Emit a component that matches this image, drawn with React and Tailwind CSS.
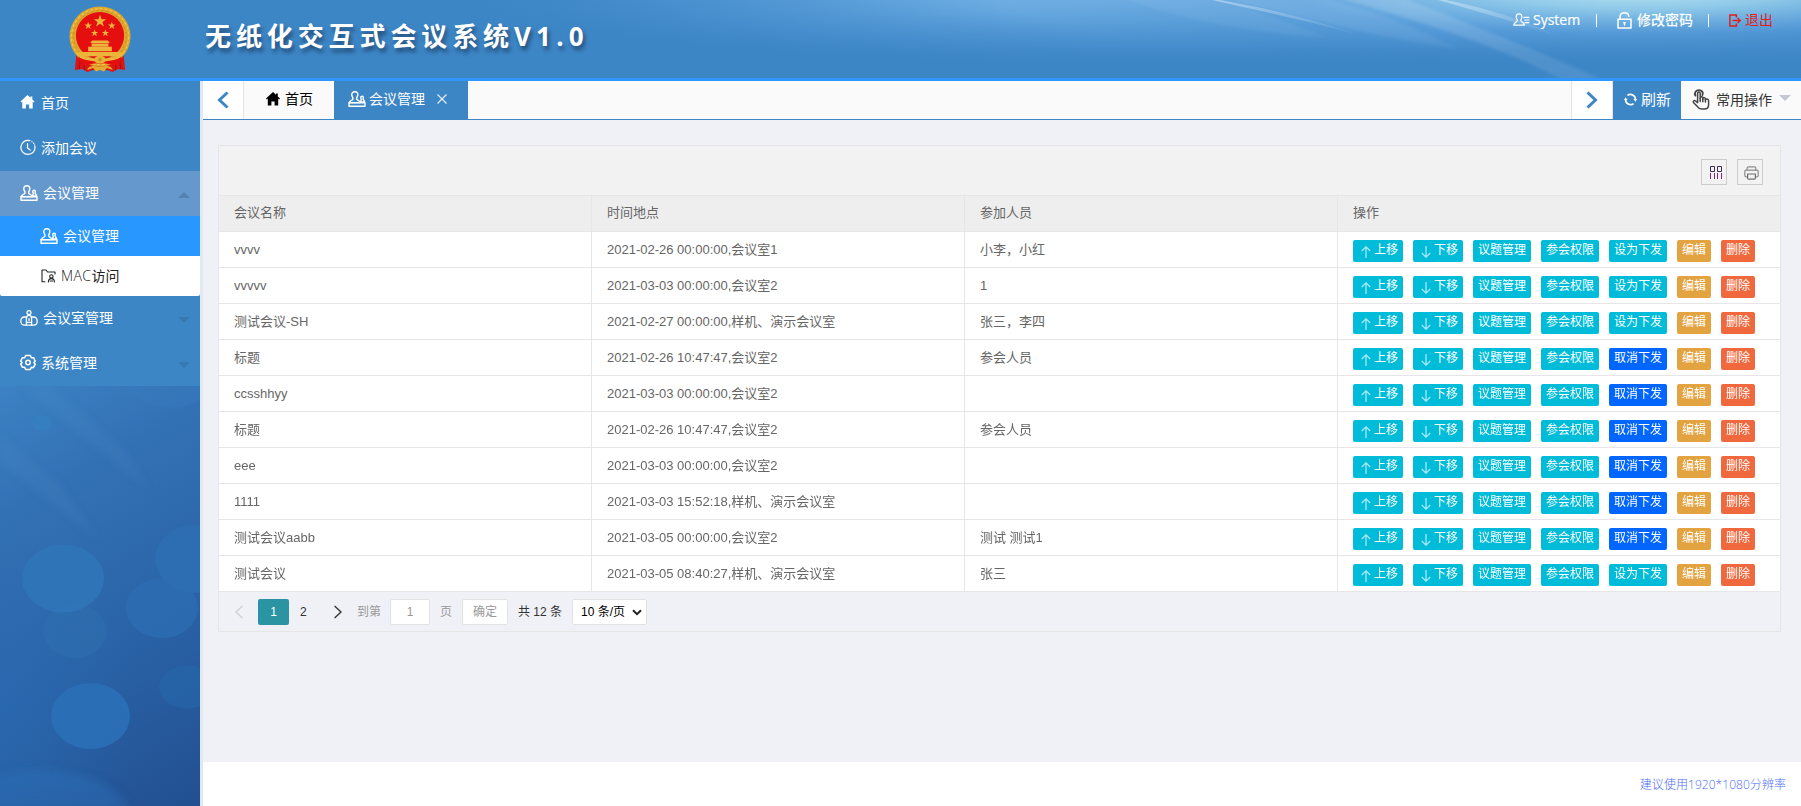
import React from "react";

const stroke = { fill: "none", stroke: "currentColor", strokeLinecap: "round", strokeLinejoin: "round" };

function HomeIcon({ className }) {
  return (
    <svg viewBox="0 0 14 14" className={className} fill="currentColor">
      <path d="M7 0 L0 6.6 L0.8 7.4 L1.8 6.6 V13.6 H5.4 V9.4 H8.6 V13.6 H12.2 V6.6 L13.2 7.4 L14 6.6 L11.8 4.5 V1.4 H10 V2.8 Z" />
    </svg>
  );
}

function ClockIcon({ className }) {
  return (
    <svg viewBox="0 0 17 17" className={className} {...stroke} strokeWidth="1.3">
      <path d="M10.5 1.2 A7.5 7.5 0 1 0 15.8 7" />
      <path d="M12.6 2.2 L12.8 2.4 M14.4 3.9 L14.6 4.2 M15.5 5.7 V5.8" />
      <path d="M8 4.5 V9 L10.8 11.2" />
    </svg>
  );
}

function MeetingIcon({ className }) {
  return (
    <svg viewBox="0 0 18 16" className={className} {...stroke} strokeWidth="1.4">
      <path d="M6.8 0.8 C4.3 0.8 3.6 2.6 3.8 4.2 C4 6 5.2 6.6 5 7.8 C4.8 9.4 2.2 9.4 1.2 11.6 H12.4 C11.4 9.4 8.8 9.4 8.6 7.8 C8.4 6.6 9.6 6 9.8 4.2 C10 2.6 9.3 0.8 6.8 0.8 Z" />
      <path d="M1 11.8 H17 V15.2 H1 Z" />
      <path d="M14 5.2 C12.6 5.2 12.4 7 13.2 7.8 C13.6 8.6 12.6 9.4 12.6 11 H16.6 C16.6 9.4 14.8 8.6 15 7.8 C15.8 7 15.4 5.2 14 5.2 Z" />
    </svg>
  );
}

function FolderUserIcon({ className }) {
  return (
    <svg viewBox="0 0 15 14" className={className} {...stroke} strokeWidth="1.1">
      <path d="M4 12.8 H1 V1 H5 L6.6 3 H14 V5" />
      <circle cx="10.4" cy="7.4" r="1.7" />
      <path d="M7.4 13 C7.4 10.6 8.6 9.6 10.4 9.6 C12.2 9.6 13.4 10.6 13.4 13 M9.2 12 H11.6" />
    </svg>
  );
}

function RoomIcon({ className }) {
  return (
    <svg viewBox="0 0 18 16" className={className} {...stroke} strokeWidth="1.3">
      <circle cx="9" cy="2.6" r="2" />
      <path d="M6.4 15 V8.4 C6.4 6.4 7.4 5.4 9 5.4 C10.6 5.4 11.6 6.4 11.6 8.4 V15" />
      <path d="M6.2 7 H4.4 C2.2 7 0.8 8.8 0.8 11 C0.8 13.4 2.4 15.2 4.4 15.2 H13.6 C15.8 15.2 17.2 13.4 17.2 11 C17.2 8.8 15.8 7 13.6 7 H11.8" />
      <path d="M9 8.6 V10.4 M7.4 12.4 H10.6" />
    </svg>
  );
}

function GearIcon({ className }) {
  return (
    <svg viewBox="0 0 17 17" className={className} {...stroke} strokeWidth="1.6">
      <path d="M6 1 H11 L12 3.4 L14.4 3.4 L16.2 7 L14.8 8.5 L16.2 10.4 L14.2 14 L12 13.6 L11 16 H6 L5 13.6 L2.6 13.6 L0.8 10.2 L2.2 8.5 L0.8 6.8 L2.6 3.4 L5 3.4 Z" />
      <circle cx="8.5" cy="8.5" r="2.4" />
    </svg>
  );
}

function UserListIcon({ className }) {
  return (
    <svg viewBox="0 0 17 14" className={className} {...stroke} strokeWidth="1.2">
      <path d="M6 0.8 C3.8 0.8 3 2.4 3.2 4.2 C3.3 5.6 4.3 6.4 4.4 7.4 C4.5 8.8 0.8 9.4 0.8 12.2 H11.4 C11.4 9.4 7.8 8.8 7.8 7.4 C7.8 6.4 8.8 5.6 8.9 4.2 C9 2.4 8.2 0.8 6 0.8 Z" />
      <path d="M11 4.4 H16 M11.6 7 H16 M12 9.6 H16" />
    </svg>
  );
}

function LockIcon({ className }) {
  return (
    <svg viewBox="0 0 15 17" className={className} {...stroke} strokeWidth="1.5">
      <path d="M1 7.2 H14 V16 H1 Z" />
      <path d="M3 7 V4.6 C3 2 4.8 0.8 7.2 0.8 C9.8 0.8 11.6 2 11.8 4.2" />
      <path d="M7.5 10.8 V13 M6.8 10.8 H8.2" />
    </svg>
  );
}

function ExitIcon({ className }) {
  return (
    <svg viewBox="0 0 12 13" className={className} fill="none" stroke="currentColor" strokeWidth="1.5">
      <path d="M7.4 3.4 V0.9 H0.9 V12.1 H7.4 V9.6" />
      <path d="M3.6 6.5 H11 M8.6 4 L11.1 6.5 L8.6 9" />
    </svg>
  );
}

function RefreshIcon({ className }) {
  return (
    <svg viewBox="0 0 13 13" className={className} fill="none" stroke="currentColor" strokeWidth="1.7">
      <path d="M3.4 2.4 A5 5 0 0 1 11.4 6.6" />
      <path d="M9.6 10.6 A5 5 0 0 1 1.6 6.4" />
      <path d="M9.4 6 H13 L11.4 8.8 Z M0 7 H3.6 L1.6 4.2 Z" fill="currentColor" stroke="none" />
    </svg>
  );
}

function HandIcon({ className }) {
  return (
    <svg viewBox="0 0 18 21" className={className} {...stroke} strokeWidth="1.5">
      <path d="M5.6 13.6 V4.4 C5.6 2.6 8.2 2.6 8.2 4.4 V9.6 V8.6 C8.6 7.4 10.6 7.6 10.8 9 V10.2 V9.4 C11.2 8.2 13.2 8.4 13.4 9.8 V10.8 C13.8 9.6 16.4 9.6 16.6 11.4 V15.4 C16.6 18.4 15 20 12.4 20 H9.6 C7.4 20 6.4 19 5.4 17.6 L1.4 13.4 C0.8 12 2.4 11 3.6 12 L5.6 13.6" />
      <path d="M8.2 9.6 V12.6 M10.8 10.2 V12.8 M13.4 10.8 V13" />
      <path d="M3.4 6.6 C2 3.6 4 1.1 6.9 1.1 C9.8 1.1 11.8 3.6 10.4 6" strokeWidth="1.9" />
    </svg>
  );
}

function Emblem({ className }) {
  const star = "M0 -1 L0.25 -0.3 L0.95 -0.3 L0.38 0.13 L0.6 0.82 L0 0.4 L-0.6 0.82 L-0.38 0.13 L-0.95 -0.3 L-0.25 -0.3 Z";
  return (
    <svg viewBox="0 0 62 68" className={className}>
      <path d="M7 50 L5.5 65 L13 64 L18 67 L24 65 H38 L44 67 L49 64 L56.5 65 L55 50 Z" fill="#dc1414" />
      <path d="M11 55 L10 64 M15 56 V65 M51 55 L52 64 M47 56 V65" stroke="#a50d12" strokeWidth="1" />
      <ellipse cx="31" cy="31" rx="31" ry="30.5" fill="#dda52b" />
      <ellipse cx="31" cy="31" rx="29" ry="28.5" fill="none" stroke="#efc64c" strokeWidth="1.2" strokeDasharray="3 2" />
      <ellipse cx="31" cy="31" rx="26.6" ry="26.2" fill="none" stroke="#bd861f" strokeWidth="0.8" strokeDasharray="2 3" />
      <ellipse cx="31" cy="30" rx="24.5" ry="24" fill="#e60f10" />
      <g fill="#ecb43a">
        <path d={star} transform="translate(31 15.5) scale(6.6)" />
        <path d={star} transform="translate(19 20) scale(4)" />
        <path d={star} transform="translate(43 20) scale(4)" />
        <path d={star} transform="translate(25.5 27.5) scale(3.8)" />
        <path d={star} transform="translate(36.5 27.5) scale(3.8)" />
        <path d="M23 35 H39 L41 37.6 H21 Z M22.5 38 H39.5 V41 H22.5 Z M19 41.4 H43 V46 H19 Z M9 46.6 H53 L50 51 H12 Z" />
      </g>
      <path d="M9 51 C17 58 24 51 31 56 C38 51 45 58 53 51 L50 59 C42 62 36 56 31 59 C26 56 20 62 12 59 Z" fill="#e60f10" />
      <path d="M8 48 C15 56 23 54 27 55 M54 48 C47 56 39 54 35 55" stroke="#ecb840" strokeWidth="2.4" fill="none" />
      <ellipse cx="31" cy="54.5" rx="6" ry="4" fill="#e8b235" />
      <circle cx="31" cy="54.5" r="1.7" fill="#c58c25" />
      <path d="M18 65 C20 59 26 61 31 61.5 C36 61 42 59 44 65 L38 63 L35 66.5 L31 65 L27 66.5 L24 63 Z" fill="#e3ab32" />
    </svg>
  );
}

function HeaderArt() {
  return (
    <svg viewBox="0 0 1801 78" preserveAspectRatio="none" className="absolute inset-0 h-full w-full">
      <defs>
        <radialGradient id="ha" gradientUnits="userSpaceOnUse" cx="0" cy="0" r="1" gradientTransform="translate(1180 -6) scale(760 74)">
          <stop offset="0" stopColor="#86c0ee" />
          <stop offset="0.35" stopColor="#6aabe2" stopOpacity="0.85" />
          <stop offset="0.7" stopColor="#4c93d2" stopOpacity="0.6" />
          <stop offset="1" stopColor="#3d86c6" stopOpacity="0" />
        </radialGradient>
        <radialGradient id="hb" gradientUnits="userSpaceOnUse" cx="0" cy="0" r="1" gradientTransform="translate(1640 -8) scale(640 76)">
          <stop offset="0" stopColor="#b2e2f2" />
          <stop offset="0.22" stopColor="#98d0ec" stopOpacity="0.9" />
          <stop offset="0.55" stopColor="#5b9fdc" stopOpacity="0.7" />
          <stop offset="1" stopColor="#3d86c6" stopOpacity="0" />
        </radialGradient>
        <linearGradient id="hr" x1="0" y1="0" x2="1" y2="1">
          <stop offset="0" stopColor="#fff" stopOpacity="0.22" />
          <stop offset="1" stopColor="#fff" stopOpacity="0.1" />
        </linearGradient>
        <linearGradient id="hs" x1="0" y1="0" x2="1" y2="0">
          <stop offset="0" stopColor="#fff" stopOpacity="0.4" />
          <stop offset="1" stopColor="#fff" stopOpacity="0" />
        </linearGradient>
        <filter id="soft" x="-10%" y="-10%" width="120%" height="120%">
          <feGaussianBlur stdDeviation="1.6" />
        </filter>
      </defs>
      <rect width="1801" height="78" fill="#3d86c6" />
      <rect width="1801" height="78" fill="url(#ha)" />
      <rect width="1801" height="78" fill="url(#hb)" />
      <g filter="url(#soft)">
        <path d="M1214 -4 C1300 18 1400 42 1460 49 C1400 20 1360 8 1320 -4 Z" fill="url(#hr)" opacity="0.5" />
        <path d="M1330 -4 C1420 20 1510 50 1566 82 H1606 C1540 50 1450 18 1400 -4 Z" fill="url(#hr)" opacity="0.75" />
        <path d="M1120 -4 C1160 14 1240 32 1330 38 L1214 -4 Z" fill="#fff" opacity="0.05" />
      </g>
      <path d="M1212 0 C1260 11 1310 21 1370 38 C1310 18 1270 9 1220 0 Z" fill="url(#hs)" />
      <path d="M1438 0 C1480 12 1530 26 1561 38 C1530 22 1490 9 1446 0 Z" fill="url(#hs)" />
    </svg>
  );
}

function SidebarArt() {
  return (
    <svg viewBox="0 0 200 420" preserveAspectRatio="none" className="block h-full w-full">
      <defs>
        <linearGradient id="sa" gradientUnits="userSpaceOnUse" x1="0" y1="0" x2="230" y2="400">
          <stop offset="0" stopColor="#3c82c4" />
          <stop offset="0.25" stopColor="#3371b5" />
          <stop offset="0.6" stopColor="#2a63a8" />
          <stop offset="1" stopColor="#225091" />
        </linearGradient>
        <radialGradient id="sb" gradientUnits="userSpaceOnUse" cx="0" cy="0" r="1" gradientTransform="translate(0 330) scale(130 200)">
          <stop offset="0" stopColor="#2a6cb4" stopOpacity="0.55" />
          <stop offset="1" stopColor="#2a6cb4" stopOpacity="0" />
        </radialGradient>
        <linearGradient id="sc" x1="0" y1="0" x2="0" y2="1">
          <stop offset="0" stopColor="#2a70b8" stopOpacity="0.7" />
          <stop offset="1" stopColor="#2664ad" stopOpacity="0.6" />
        </linearGradient>
        <filter id="haze" x="-20%" y="-20%" width="140%" height="140%">
          <feGaussianBlur stdDeviation="4" />
        </filter>
      </defs>
      <rect width="200" height="420" fill="url(#sa)" />
      <rect width="200" height="420" fill="url(#sb)" />
      <g filter="url(#haze)">
        <path d="M22 0 L150 105 L125 65 L50 0 Z" fill="#5a9ad0" opacity="0.12" />
        <path d="M0 75 L100 155 L60 100 L0 50 Z" fill="#5a9ad0" opacity="0.12" />
        <ellipse cx="40" cy="432" rx="90" ry="48" fill="url(#sc)" opacity="0.7" />
      </g>
      <ellipse cx="170" cy="-10" rx="45" ry="32" fill="#3a80c2" opacity="0.22" />
      <ellipse cx="42" cy="37" rx="10" ry="8" fill="#3286c4" opacity="0.45" />
      <ellipse cx="75" cy="245" rx="32" ry="27" fill="#2e70b0" opacity="0.45" />
      <ellipse cx="63" cy="192.5" rx="41" ry="34" fill="#3076b8" opacity="0.9" />
      <ellipse cx="162" cy="222" rx="36" ry="30" fill="#2d6db2" opacity="0.8" />
      <ellipse cx="194" cy="173" rx="39" ry="34" fill="#2e6eb3" opacity="0.85" />
      <ellipse cx="187" cy="301" rx="28" ry="21.5" fill="#2764a8" opacity="0.75" />
      <ellipse cx="90.5" cy="330" rx="39.5" ry="33" fill="#2a6fb6" opacity="0.95" />
    </svg>
  );
}

function MenuItem({ icon, label, arrow, active, gap = "gap-[5px]" }) {
  return (
    <div className={`flex h-[45px] items-center pl-5 pr-2.5 ${gap} ${active ? "bg-[#6598cd]" : "bg-[#3d86c6]"}`}>
      {icon}
      <span className="-mt-px flex-1">{label}</span>
      {arrow === "down" && <i className="mt-0.5 border-x-[6px] border-t-[6px] border-x-transparent border-t-[#34719f]/60" />}
      {arrow === "up" && <i className="mt-0.5 border-x-[6px] border-b-[6px] border-x-transparent border-b-[#5681b3]" />}
    </div>
  );
}

const meetings = [
  ["vvvv", "2021-02-26 00:00:00,会议室1", "小李，小红", false],
  ["vvvvv", "2021-03-03 00:00:00,会议室2", "1", false],
  ["测试会议-SH", "2021-02-27 00:00:00,样机、演示会议室", "张三，李四", false],
  ["标题", "2021-02-26 10:47:47,会议室2", "参会人员", true],
  ["ccsshhyy", "2021-03-03 00:00:00,会议室2", "", true],
  ["标题", "2021-02-26 10:47:47,会议室2", "参会人员", true],
  ["eee", "2021-03-03 00:00:00,会议室2", "", true],
  ["1111", "2021-03-03 15:52:18,样机、演示会议室", "", true],
  ["测试会议aabb", "2021-03-05 00:00:00,会议室2", "测试 测试1", true],
  ["测试会议", "2021-03-05 08:40:27,样机、演示会议室", "张三", false],
];

function Arrow({ down }) {
  return (
    <svg viewBox="0 0 10 12" className="mt-0.5 mr-[3px] h-3 w-2.5" fill="none" stroke="#a5e8f1" strokeWidth="1.3">
      {down ? <path d="M5 0 V11 M0.8 7 L5 11.2 L9.2 7" /> : <path d="M5 12 V1 M0.8 5 L5 0.8 L9.2 5" />}
    </svg>
  );
}

function Btn({ color, width, children }) {
  return (
    <button className={`flex h-[22px] items-center justify-center rounded-[2px] pb-px text-xs leading-[21px] text-white ${color} ${width}`}>
      {children}
    </button>
  );
}

const grid = "grid grid-cols-[373px_373px_373px_1fr]";
const cell = "flex items-center border-r border-b border-[#e6e6e6] pl-[15px]";
const lastCell = "flex items-center border-b border-[#e6e6e6] pl-[15px]";

function Row({ item }) {
  const [name, place, people, sent] = item;
  return (
    <div className={`${grid} h-9 bg-white`}>
      <div className={cell}>{name}</div>
      <div className={cell}>{place}</div>
      <div className={cell}>{people}</div>
      <div className={`${lastCell} gap-2.5 pt-[3px]`}>
        <Btn color="bg-[#00bcd9]" width="w-[50px] pl-[3px]"><Arrow />上移</Btn>
        <Btn color="bg-[#00bcd9]" width="w-[50px] pl-[3px]"><Arrow down />下移</Btn>
        <Btn color="bg-[#00bcd9]" width="w-[58px]">议题管理</Btn>
        <Btn color="bg-[#00bcd9]" width="w-[58px]">参会权限</Btn>
        {sent ? (
          <Btn color="bg-[#0066ff]" width="w-[58px]">取消下发</Btn>
        ) : (
          <Btn color="bg-[#00bcd9]" width="w-[58px]">设为下发</Btn>
        )}
        <Btn color="bg-[#e4a341]" width="w-[34px]">编辑</Btn>
        <Btn color="bg-[#f0693e]" width="w-[34px]">删除</Btn>
      </div>
    </div>
  );
}

function Pager() {
  return (
    <div className="flex h-[39px] items-center pt-px pl-4 text-xs text-[#333]">
      <svg viewBox="0 0 8 14" className="h-3.5 w-2" fill="none" stroke="#cfd0d4" strokeWidth="1.4"><path d="M7.4 1 L1 7 L7.4 13" /></svg>
      <span className="ml-[15px] h-[26px] w-[31px] rounded-[2px] bg-[#2a94a2] text-center leading-[26px] text-white">1</span>
      <span className="ml-[11px] w-[7px]">2</span>
      <svg viewBox="0 0 8 14" className="ml-[27px] h-3.5 w-2" fill="none" stroke="#333" strokeWidth="1.4"><path d="M0.6 1 L7 7 L0.6 13" /></svg>
      <span className="ml-[15px] w-6 text-[#999]">到第</span>
      <span className="ml-[9px] h-[26px] w-10 rounded-[2px] border border-[#e2e2e2] bg-white text-center leading-6 text-[#999]">1</span>
      <span className="ml-2.5 w-3 text-[#999]">页</span>
      <span className="ml-2.5 h-[26px] w-[46px] rounded-[2px] border border-[#e2e2e2] bg-white text-center leading-[25px] text-[#999]">确定</span>
      <span className="ml-2.5 w-11 whitespace-nowrap">共 12 条</span>
      <span className="ml-2.5 flex h-[26px] w-[75px] items-center justify-between rounded-[2px] border border-[#e2e2e2] bg-white pl-2 pr-1 text-black">
        <span className="whitespace-nowrap">10 条/页</span>
        <svg viewBox="0 0 10 7" className="h-[7px] w-2.5" fill="none" stroke="#222" strokeWidth="2"><path d="M1 1.2 L5 5.2 L9 1.2" /></svg>
      </span>
    </div>
  );
}

export default function App() {
  return (
    <div className="flex h-[806px] w-[1801px] flex-col overflow-hidden bg-white font-['Liberation_Sans','Noto_Sans_CJK_SC',sans-serif] text-[13px] text-[#666]">
      <header className="relative h-[81px] shrink-0 border-b-[3px] border-[#3197ff]">
        <HeaderArt />
        <div className="relative flex h-full items-start text-white">
          <Emblem className="mt-1.5 ml-[69px] h-[67px] w-[62px] shrink-0" />
          <h1 className="ml-[74px] pt-[17px] text-[26px] leading-[38px] font-bold tracking-[4.9px] whitespace-nowrap [text-shadow:2px_4px_4px_rgba(20,45,75,0.65)]">
            无纸化交互式会议系统<span className="font-['Open_Sans'] tracking-[5.2px]">V1.0</span>
          </h1>
          <nav className="ml-auto flex h-10 items-center pr-7 font-['Open_Sans','Noto_Sans_CJK_SC',sans-serif] text-sm">
            <UserListIcon className="mr-[3px] h-3.5 w-[17px]" />
            <span className="w-[47px] text-[14px] font-medium [-webkit-text-stroke:0.2px_white]">System</span>
            <i className="ml-4 h-[13px] w-px bg-white" />
            <LockIcon className="ml-5 h-[17px] w-[15px]" />
            <span className="ml-[5px] w-14 font-medium whitespace-nowrap">修改密码</span>
            <i className="ml-[15px] h-[13px] w-px bg-white" />
            <ExitIcon className="ml-5 h-[13px] w-3 text-[#e0201c]" />
            <span className="-mt-px ml-1 w-7 whitespace-nowrap text-[#e0201c]">退出</span>
          </nav>
        </div>
      </header>

      <div className="flex min-h-0 flex-1">
        <aside className="flex w-[200px] shrink-0 flex-col font-['Open_Sans','Noto_Sans_CJK_SC',sans-serif] text-sm text-white">
          <MenuItem icon={<HomeIcon className="mr-px -mt-[3px] h-3.5 w-[15px]" />} label="首页" />
          <MenuItem icon={<ClockIcon className="-mt-0.5 h-[17px] w-4" />} label="添加会议" />
          <MenuItem icon={<MeetingIcon className="-mt-0.5 h-4 w-[18px]" />} label="会议管理" arrow="up" active />
          <div className="flex h-10 items-center gap-[5px] bg-[#2897ff] pl-10">
            <MeetingIcon className="h-4 w-[18px]" />
            会议管理
          </div>
          <div className="bg-[#3d86c6]">
            <div className="flex h-10 items-center gap-[5px] rounded-b-[2px] bg-white pl-[41px] text-[#222]">
              <FolderUserIcon className="h-3.5 w-[15px]" />
              <span>
                <span className="font-light tracking-[0.4px]">MAC</span>访问
              </span>
            </div>
          </div>
          <MenuItem icon={<RoomIcon className="-mt-px h-4 w-[18px]" />} label="会议室管理" arrow="down" />
          <MenuItem icon={<GearIcon className="-mt-0.5 h-[17px] w-4" />} label="系统管理" arrow="down" />
          <div className="min-h-0 flex-1">
            <SidebarArt />
          </div>
        </aside>

        <main className="flex min-w-0 flex-1 flex-col border-l-[3px] border-[#e2e8f0] bg-[#f0f1f7]">
          <div className="flex h-[39px] shrink-0 border-b border-[#3d86c6] bg-[#fafafa] font-['Open_Sans','Noto_Sans_CJK_SC',sans-serif] text-sm">
            <div className="flex w-[41px] items-center justify-center border-r border-[#e4e4e4] bg-white">
              <svg viewBox="0 0 12 18" className="h-[18px] w-3" fill="none" stroke="#3d86c6" strokeWidth="3"><path d="M10.5 1.5 L2.5 9 L10.5 16.5" /></svg>
            </div>
            <div className="flex w-[90px] items-center pl-[22px] pb-[3px] text-black">
              <HomeIcon className="mr-[5px] h-3.5 w-3.5" />
              首页
            </div>
            <div className="flex w-[134px] items-center bg-[#3d86c6] pl-3.5 pb-[3px] text-white">
              <MeetingIcon className="mr-[3px] h-4 w-[18px]" />
              会议管理
              <svg viewBox="0 0 10 10" className="ml-3 h-2.5 w-2.5" fill="none" stroke="#e4eefa" strokeWidth="1.2"><path d="M0.5 0.5 L9.5 9.5 M9.5 0.5 L0.5 9.5" /></svg>
            </div>
            <div className="ml-auto flex w-[42px] items-center justify-center border-x border-[#e4e4e4] bg-white">
              <svg viewBox="0 0 12 18" className="h-[18px] w-3" fill="none" stroke="#3d86c6" strokeWidth="3"><path d="M1.5 1.5 L9.5 9 L1.5 16.5" /></svg>
            </div>
            <div className="flex w-[68px] items-center bg-[#3d86c6] pl-[11px] pb-px text-[15px] text-white">
              <RefreshIcon className="mr-1 h-[13px] w-[13px]" />
              刷新
            </div>
            <div className="flex w-[120px] items-center pl-[11px] pb-px text-[#333]">
              <HandIcon className="mr-[6px] h-[21px] w-[18px] text-[#444]" />
              常用操作
              <i className="mb-4 ml-[7px] mt-3 border-x-[6px] border-t-[6px] border-x-transparent border-t-[#c5c8d0]" />
            </div>
          </div>

          <div className="flex-1 px-[15px] pt-[25px] pr-5">
            <section className="border border-[#e6e6e6]">
              <div className="flex h-[50px] items-center justify-end gap-2.5 border-b border-[#e6e6e6] bg-[#f2f2f2] pr-[17px]">
                <div className="mt-[3px] flex h-[26px] w-[26px] items-center justify-center border border-[#ccc]">
                  <svg viewBox="0 0 14 14" className="ml-[3px] h-3.5 w-3.5" fill="none" stroke="#3c2b55" strokeWidth="1">
                    <path d="M1.5 1.5 H5.5 V6.5 H1.5 Z M8.5 1.5 H12.5 V6.5 H8.5 Z" />
                    <path d="M1.5 8 V14 M5.5 8 V14 M8.5 8 V14 M12.5 8 V14" stroke="#7c2a80" />
                  </svg>
                </div>
                <div className="mt-[3px] flex h-[26px] w-[26px] items-center justify-center border border-[#ccc]">
                  <svg viewBox="0 0 15 14" className="mt-0.5 ml-[3px] h-3.5 w-[15px]" {...stroke} stroke="#8c8c8c" strokeWidth="1.2">
                    <path d="M3.2 4 V2 C3.2 1.2 3.6 0.8 4.4 0.8 H10.6 C11.4 0.8 11.8 1.2 11.8 2 V4" />
                    <path d="M3.4 10.8 H2 C1.2 10.8 0.8 10.4 0.8 9.6 V5.6 C0.8 4.8 1.2 4.2 2 4.2 H13 C13.8 4.2 14.2 4.8 14.2 5.6 V9.6 C14.2 10.4 13.8 10.8 13 10.8 H11.6" />
                    <path d="M3.6 8 H11.4 V12 C11.4 12.8 11 13.2 10.4 13.2 H4.6 C4 13.2 3.6 12.8 3.6 12 Z" stroke="#707070" />
                  </svg>
                </div>
              </div>
              <div className={`${grid} h-9 bg-[#eee]`}>
                <div className={`${cell} pb-0.5`}>会议名称</div>
                <div className={`${cell} pb-0.5`}>时间地点</div>
                <div className={`${cell} pb-0.5`}>参加人员</div>
                <div className={`${lastCell} pb-0.5`}>操作</div>
              </div>
              {meetings.map((item, i) => (
                <Row key={i} item={item} />
              ))}
              <Pager />
            </section>
          </div>

          <footer className="flex h-11 shrink-0 items-center justify-end bg-white pt-0.5 pr-[15px] font-['Open_Sans','Noto_Sans_CJK_SC',sans-serif] text-xs font-light tracking-[0.05px] text-[#4a6cf7]">
            建议使用1920*1080分辨率
          </footer>
        </main>
      </div>
    </div>
  );
}
